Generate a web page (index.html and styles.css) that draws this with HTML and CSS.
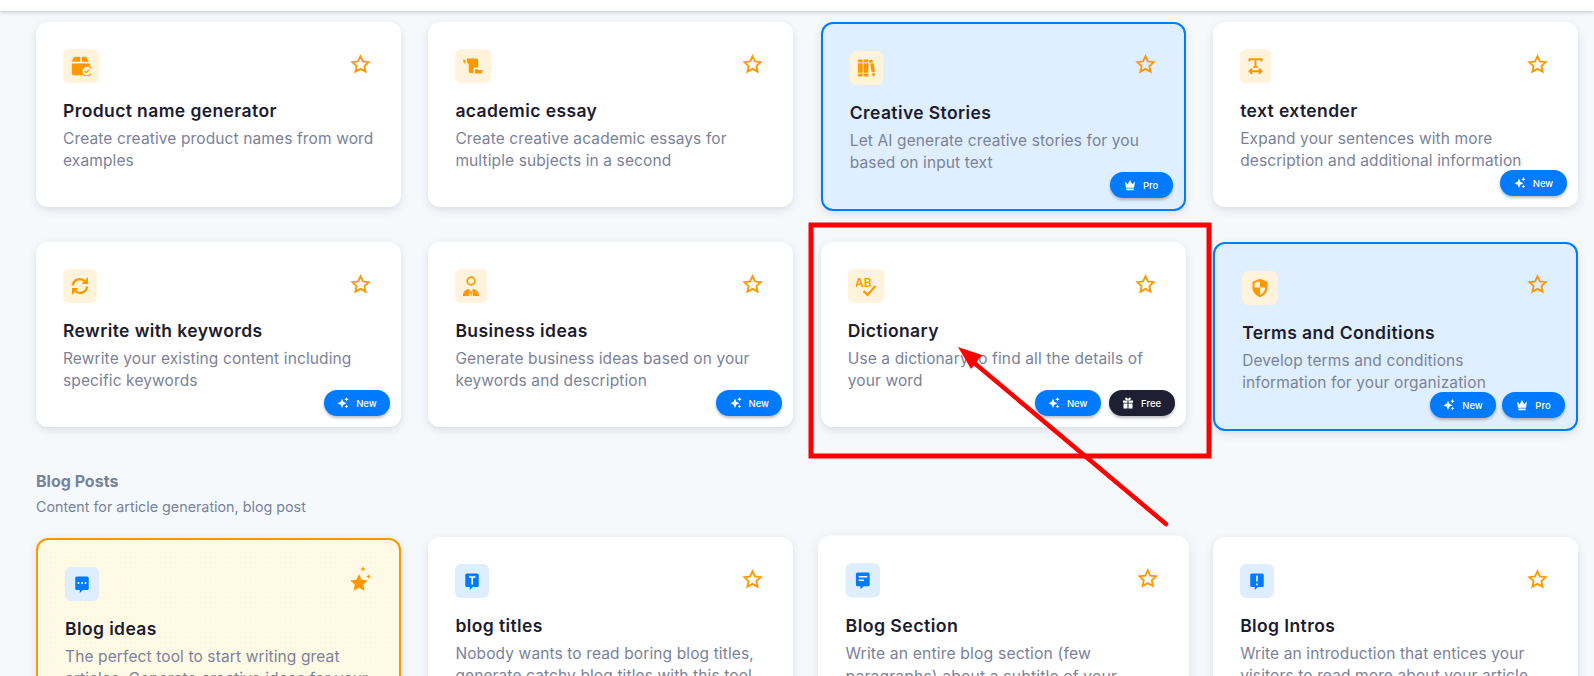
FILE: index.html
```html
<!DOCTYPE html>
<html lang="en">
<head>
    <meta charset="UTF-8">
    <meta name="viewport" content="width=device-width, initial-scale=1.0">
    <title>Templates</title>
    <link rel="stylesheet" href="styles.css">
</head>
<body>

    <svg class="sprite" aria-hidden="true">
        <symbol id="star" viewBox="0 0 24 24"><path d="M12 2.600l2.900 6.300 6.900.8-5.100 4.700 1.400 6.800-6.100-3.400-6.100 3.400 1.400-6.800-5.100-4.700 6.900-.8z" fill="none" stroke="currentColor" stroke-width="2.200" stroke-linejoin="miter"/></symbol>
        <symbol id="sparkle" viewBox="0 0 24 24"><path d="M10 3l2.600 6.700L19 12.500l-6.400 2.800L10 22l-2.600-6.700L1 12.500l6.400-2.800z"/><path d="M19 0l1.300 3.200L23.500 4.500l-3.200 1.300L19 9l-1.300-3.200L14.500 4.500l3.200-1.300zM19 15l1.100 2.700 2.700 1.100-2.700 1.100L19 22.800l-1.100-2.900-2.700-1.100 2.700-1.100z"/></symbol>
        <symbol id="crown" viewBox="0 0 24 24"><path d="M2 5l5.500 5.500L12 2l4.500 8.500L22 5l-2 12.500H4z"/><rect x="4.500" y="19" width="15" height="3.500" rx="1"/></symbol>
        <symbol id="gift" viewBox="0 0 24 24"><path d="M2 7h9v4.500H2zM13 7h9v4.500h-9zM3 13h8v10H3zM13 13h8v10h-8z"/><path d="M12 7C8.500 7 5.500 5.500 6.500 2.500 7.500 0 11 1 12 5.500 13 1 16.500 0 17.500 2.500 18.500 5.500 15.500 7 12 7z"/></symbol>
        <symbol id="bubble" viewBox="0 0 24 24"><path d="M5 2h14a2 2 0 0 1 2 2v14a2 2 0 0 1-2 2h-6l-4 4v-4H5a2 2 0 0 1-2-2V4a2 2 0 0 1 2-2z"/></symbol>
    </svg>

    <div class="topbar"></div>

    <main class="page">
        <section class="grid">
            <article class="card">
                <div class="card-head">
                    <span class="icon">
                        <svg width="20" height="20" viewBox="0 0 24 24"><path d="M7 1h4v6H1l1.500-4A3 3 0 0 1 5 1zM13 1h4a3 3 0 0 1 2.500 2l1.500 4H13zM1 9h22v3.500a7 7 0 0 0-8.500 10.500H3a2 2 0 0 1-2-2z"/><circle cx="19" cy="18" r="6" fill="none" stroke="#ff9800" stroke-width="1.500"/><path d="M16.500 18l2 2 3-3.500" fill="none" stroke="#ff9800" stroke-width="1.500"/></svg>
                    </span>
                    <svg class="star"><use href="#star"/></svg>
                </div>
                <h3>Product name generator</h3>
                <p>Create creative product names from word examples</p>
            </article>

            <article class="card">
                <div class="card-head">
                    <span class="icon">
                        <svg width="20" height="16" viewBox="0 0 21 16"><path d="M0 1.500h2.500v3.500H1z"/><path d="M4 0h9.500a2.500 2.500 0 0 1 2.500 2.500V9.500h-5v6H8a2 2 0 0 1-2-2V5.500H4.500z"/><path d="M12.500 11.500h3l.8 1H21l-1.500 3.500h-7z"/></svg>
                    </span>
                    <svg class="star"><use href="#star"/></svg>
                </div>
                <h3>academic essay</h3>
                <p>Create creative academic essays for multiple subjects in a second</p>
            </article>

            <article class="card card-pro">
                <div class="card-head">
                    <span class="icon">
                        <svg width="17" height="18" viewBox="0 0 18 18"><path d="M0 0h5v3H0zM6 0h5v3H6zM0 4h5v10H0zM6 4h5v10H6zM0 15h5v3H0zM6 15h5v3H6z"/><path d="M11.500 1l3.500-1 1 2.800-3.500 1zM13 4.800l3.500-1 1.500 9-3.500 1zM15 14.800l2.800-.8.2 3-2.500 1z"/></svg>
                    </span>
                    <svg class="star"><use href="#star"/></svg>
                </div>
                <h3>Creative Stories</h3>
                <p>Let AI generate creative stories for you based on input text</p>
                <div class="badges">
                    <span class="badge badge-pro"><svg><use href="#crown"/></svg>Pro</span>
                </div>
            </article>

            <article class="card">
                <div class="card-head">
                    <span class="icon">
                        <svg width="15" height="20" viewBox="0 0 20 24"><path d="M2 6V3h16v3M10 3v10M7 13.500h6" fill="none" stroke="#ff9800" stroke-width="2.600"/><path d="M1 19h18M5.500 15.500L2 19l3.500 3.500M14.500 15.500L18 19l-3.500 3.500" fill="none" stroke="#ff9800" stroke-width="2.600"/></svg>
                    </span>
                    <svg class="star"><use href="#star"/></svg>
                </div>
                <h3>text extender</h3>
                <p>Expand your sentences with more description and additional information</p>
                <div class="badges">
                    <span class="badge badge-wide"><svg><use href="#sparkle"/></svg>New</span>
                </div>
            </article>

            <article class="card">
                <div class="card-head">
                    <span class="icon">
                        <svg width="18" height="18" viewBox="0 0 18 18"><path d="M1.800 8.500A7 7 0 0 1 13.500 4M16.200 9.500A7 7 0 0 1 4.500 14" fill="none" stroke="#ff9800" stroke-width="2.300"/><path d="M17 0v7h-6.500zM1 18v-7h6.500z"/></svg>
                    </span>
                    <svg class="star"><use href="#star"/></svg>
                </div>
                <h3>Rewrite with keywords</h3>
                <p>Rewrite your existing content including specific keywords</p>
                <div class="badges">
                    <span class="badge"><svg><use href="#sparkle"/></svg>New</span>
                </div>
            </article>

            <article class="card">
                <div class="card-head">
                    <span class="icon">
                        <svg width="16" height="20" viewBox="0 0 16 20"><circle cx="8" cy="5" r="3.800" fill="none" stroke="#ff9800" stroke-width="1.700"/><path d="M0 20c0-4.500 2.500-6.500 6-7l.8 1-.8 6zM16 20c0-4.500-2.500-6.500-6-7l-.8 1 .8 6zM8 14.500l1 1.500-.6 4H7.600L7 16z"/></svg>
                    </span>
                    <svg class="star"><use href="#star"/></svg>
                </div>
                <h3>Business ideas</h3>
                <p>Generate business ideas based on your keywords and description</p>
                <div class="badges">
                    <span class="badge"><svg><use href="#sparkle"/></svg>New</span>
                </div>
            </article>

            <article class="card">
                <div class="card-head">
                    <span class="icon">
                        <svg width="20" height="26" viewBox="0 0 20 26"><text class="icon-text" x="-1" y="14">AB</text><path d="M7.500 18l4 4 8-9" fill="none" stroke="#ff9800" stroke-width="2.200"/></svg>
                    </span>
                    <svg class="star"><use href="#star"/></svg>
                </div>
                <h3>Dictionary</h3>
                <p>Use a dictionary to find all the details of your word</p>
                <div class="badges">
                    <span class="badge"><svg><use href="#sparkle"/></svg>New</span>
                    <span class="badge badge-dark"><svg><use href="#gift"/></svg>Free</span>
                </div>
            </article>

            <article class="card card-pro">
                <div class="card-head">
                    <span class="icon">
                        <svg width="20" height="20" viewBox="0 0 24 24"><path d="M12 1l9 3.500v7c0 5.500-3.500 9.500-9 11.500-5.500-2-9-6-9-11.500v-7zm0 2.500L5.500 6v5.500H12zm0 8v9c3.500-1.500 6-5 6.500-9z" fill-rule="evenodd"/></svg>
                    </span>
                    <svg class="star"><use href="#star"/></svg>
                </div>
                <h3>Terms and Conditions</h3>
                <p>Develop terms and conditions<br>information for your organization</p>
                <div class="badges badges-tight">
                    <span class="badge"><svg><use href="#sparkle"/></svg>New</span>
                    <span class="badge badge-pro"><svg><use href="#crown"/></svg>Pro</span>
                </div>
            </article>
        </section>

        <header class="group-head">
            <h2>Blog Posts</h2>
            <p>Content for article generation, blog post</p>
        </header>

        <section class="grid">
            <article class="card card-pick">
                <div class="card-head">
                    <span class="icon icon-blue">
                        <svg width="18" height="20"><use href="#bubble"/><circle cx="5.500" cy="9" r="1" fill="#fff"/><circle cx="9" cy="9" r="1" fill="#fff"/><circle cx="12.500" cy="9" r="1" fill="#fff"/></svg>
                    </span>
                    <svg class="star-pick" width="21" height="28" viewBox="0 0 21 28"><path d="M9 8l2.600 5.700 6.200.7-4.600 4.200 1.300 6.200L9 21.700l-5.500 3.100 1.300-6.200-4.600-4.200 6.200-.7z"/><path d="M13 0l.8 2.200 2.200.8-2.200.8L13 6l-.8-2.200L10 3l2.200-.8zM18.500 8l.7 1.800 1.800.7-1.800.7-.7 1.800-.7-1.800-1.800-.7 1.800-.7z"/></svg>
                </div>
                <h3>Blog ideas</h3>
                <p>The perfect tool to start writing great articles. Generate creative ideas for your</p>
            </article>

            <article class="card">
                <div class="card-head">
                    <span class="icon icon-blue">
                        <svg width="18" height="20"><use href="#bubble"/><path d="M6 6h6.500M9.200 6v7.500" fill="none" stroke="#fff" stroke-width="1.700"/></svg>
                    </span>
                    <svg class="star"><use href="#star"/></svg>
                </div>
                <h3>blog titles</h3>
                <p>Nobody wants to read boring blog titles, generate catchy blog titles with this tool</p>
            </article>

            <article class="card card-hover">
                <div class="card-head">
                    <span class="icon icon-blue">
                        <svg width="18" height="20"><use href="#bubble"/><path d="M5 6.500h8.500M5 10h5" fill="none" stroke="#fff" stroke-width="1.500"/></svg>
                    </span>
                    <svg class="star"><use href="#star"/></svg>
                </div>
                <h3>Blog Section</h3>
                <p>Write an entire blog section (few paragraphs) about a subtitle of your</p>
            </article>

            <article class="card">
                <div class="card-head">
                    <span class="icon icon-blue">
                        <svg width="18" height="20"><use href="#bubble"/><path d="M9 4.500v6M9 12.500v1.800" fill="none" stroke="#fff" stroke-width="1.500"/></svg>
                    </span>
                    <svg class="star"><use href="#star"/></svg>
                </div>
                <h3>Blog Intros</h3>
                <p>Write an introduction that entices your visitors to read more about your article</p>
            </article>
        </section>
    </main>

    <!-- red annotation drawn over the screenshot -->
    <svg class="markup" width="1594" height="676" aria-hidden="true">
        <rect x="811" y="225" width="398" height="231" fill="none" stroke="#f00" stroke-width="5"/>
        <path d="M1166 524L972 361" fill="none" stroke="#f00" stroke-width="4.500" stroke-linecap="round"/>
        <path d="M958 347L982 355L971 369z" fill="#f00"/>
    </svg>

</body>
</html>
```

FILE: styles.css
```css
* {
    box-sizing: border-box;
}

body {
    font-family: Inter, 'Noto Sans', sans-serif;
    background: #f6f9fc;
    margin: 0;
    height: 676px;
    overflow: hidden;
    position: relative;
}

.sprite {
    display: none;
}

.topbar {
    height: 11px;
    background: #fff;
    box-shadow: 0 1px 4px rgba(60, 70, 90, 0.3);
}

.page {
    padding: 11px 16px 0 36px;
}

.grid {
    display: grid;
    grid-template-columns: repeat(4, 1fr);
    column-gap: 27.5px;
    row-gap: 31px;
    align-items: start;
}

.card {
    position: relative;
    height: 185px;
    padding: 27px;
    background: #fff;
    border-radius: 12px;
    box-shadow: 0 3px 8px rgba(50, 60, 80, 0.14);
}

.card-pro {
    height: 189px;
    background: #dfefff;
    border: 2px solid #007bff;
}

.card-pick {
    height: 189px;
    margin-top: 1px;
    background-color: #fffae6;
    background-image: radial-gradient(#fbf4d8 0.7px, transparent 0.8px);
    background-size: 5px 5px;
    border: 2px solid #ff9800;
}

.card-hover {
    transform: scale(1.016);
    box-shadow: 0 3px 12px rgba(50, 60, 80, 0.12);
}

.card-head {
    display: flex;
    justify-content: space-between;
    align-items: flex-start;
    height: 34px;
}

.icon {
    display: flex;
    align-items: center;
    justify-content: center;
    height: 34px;
    padding: 0 8px;
    background: #fff3dc;
    border-radius: 6px;
    fill: #ff9800;
}

.icon-blue {
    background: #dfeeff;
    fill: #007bff;
}

.icon-text {
    font-size: 12px;
    font-weight: 600;
    fill: #ff9800;
}

.star {
    width: 21px;
    height: 20px;
    margin: 5px 3px 0 0;
    color: #ff9800;
}

.card-pro .star {
    margin: 3px 1px 0 0;
}

.star-pick {
    margin: -1px 1px 0 0;
    fill: #ff9800;
}

.card h3 {
    margin: 16px 0 0;
    font-size: 17.500px;
    letter-spacing: 0.4px;
    line-height: 24px;
    font-weight: 600;
    color: #1c1c2e;
}

.card p {
    margin: 5px -10px 0 0;
    font-size: 15.500px;
    letter-spacing: 0.12px;
    line-height: 22px;
    color: #7b8299;
}

.badges {
    position: absolute;
    right: 11px;
    bottom: 11px;
    display: flex;
    gap: 8px;
}

.badges-tight {
    gap: 6px;
}

.badge {
    display: flex;
    align-items: center;
    justify-content: center;
    gap: 7px;
    width: 66px;
    height: 26px;
    background: #007bff;
    border-radius: 13px;
    box-shadow: 0 2px 3px rgba(30, 40, 60, 0.3);
    color: #fff;
    font-size: 9.500px;
    font-weight: 500;
    fill: #fff;
}

.badge svg {
    width: 12px;
    height: 12px;
}

.badge-wide {
    width: 67px;
}

.badge-pro {
    width: 63px;
}

.badge-dark {
    background: #1f1f33;
}

.group-head {
    margin: 40px 0 20px;
}

.group-head h2 {
    margin: 0;
    font-size: 16px;
    line-height: 20px;
    font-weight: 700;
    color: #76839a;
}

.group-head p {
    margin: 6px 0 0;
    font-size: 14.300px;
    line-height: 20px;
    color: #76839a;
}

.markup {
    position: absolute;
    top: 0;
    left: 0;
    pointer-events: none;
}
```
